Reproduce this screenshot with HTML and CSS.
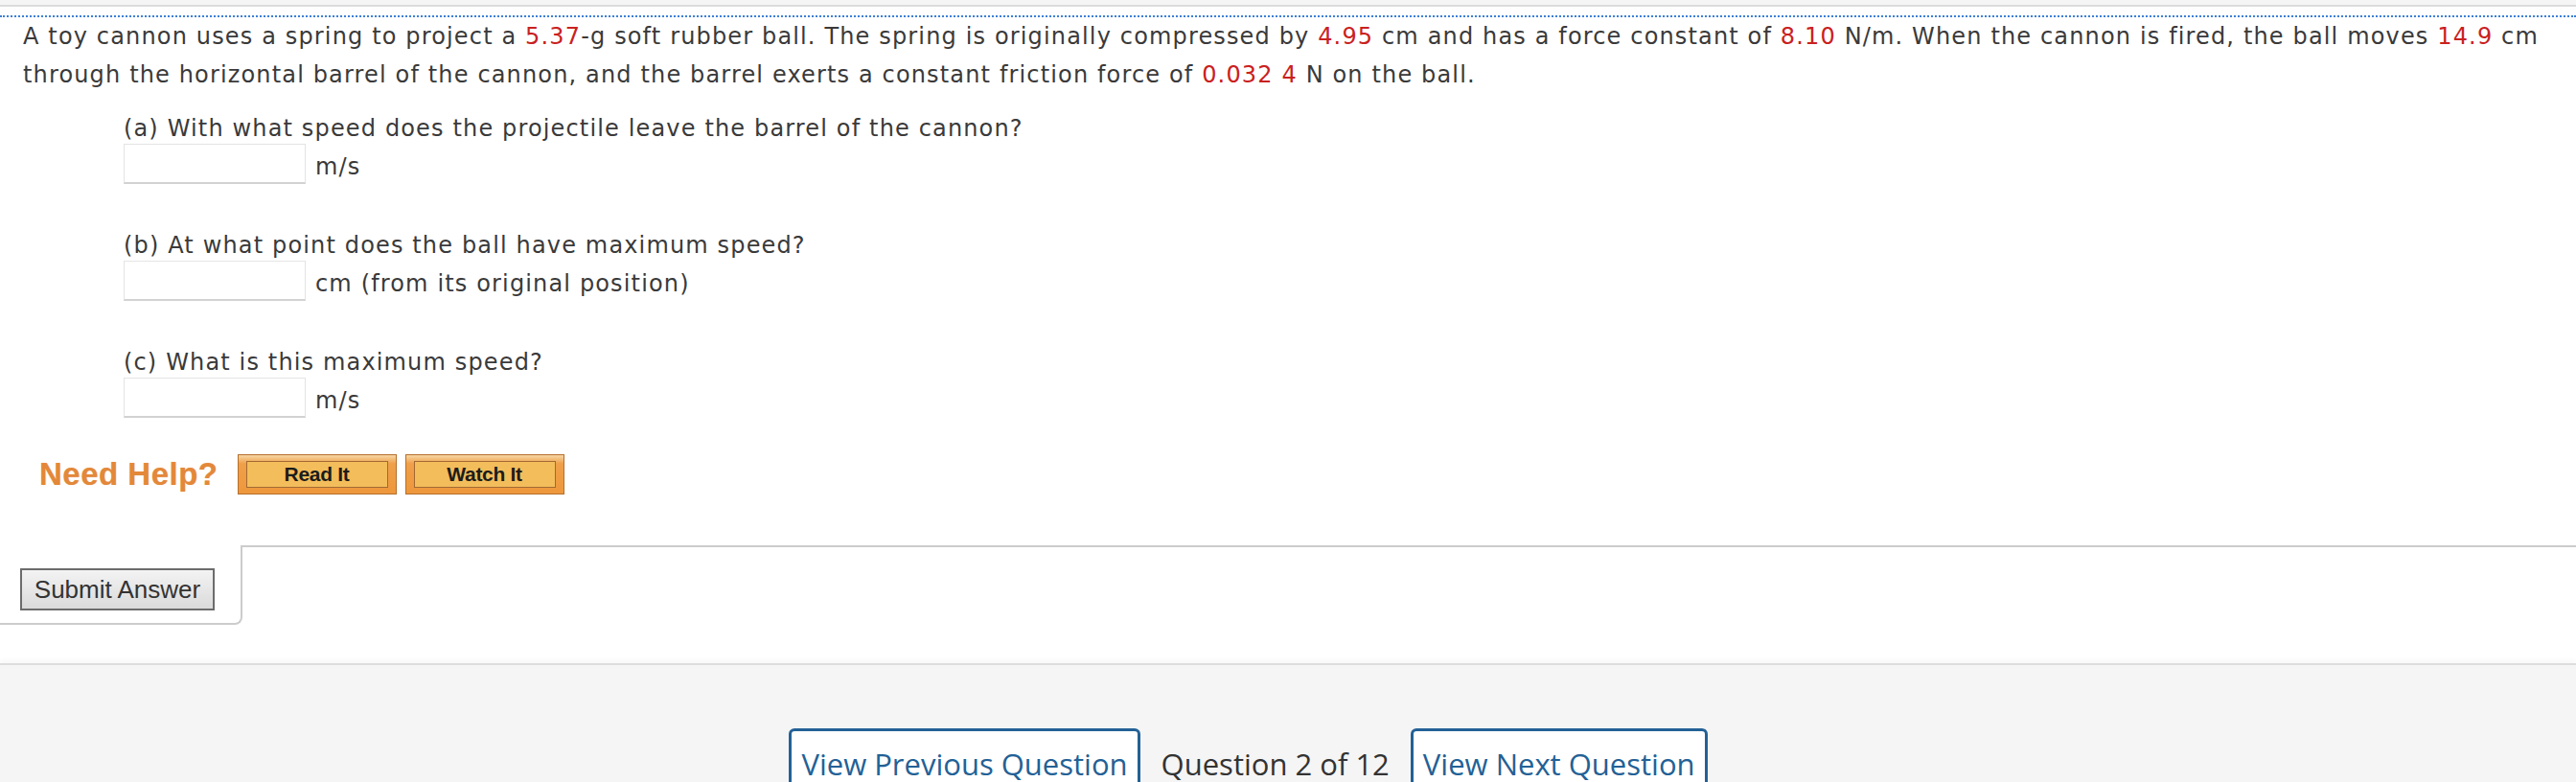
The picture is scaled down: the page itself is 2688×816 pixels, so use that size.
FILE: index.html
```html
<!DOCTYPE html>
<html lang="en">
<head>
<meta charset="utf-8">
<title>Question 2 of 12</title>
<link rel="stylesheet" href="styles.css">
</head>
<body>
<div class="topband"></div>
<div class="question">
  <p class="stem">A toy cannon uses a spring to project a <span class="v">5.37</span>-g soft rubber ball. The spring is originally compressed by <span class="v">4.95</span> cm and has a force constant of <span class="v">8.10</span> N/m. When the cannon is fired, the ball moves <span class="v">14.9</span> cm through the horizontal barrel of the cannon, and the barrel exerts a constant friction force of <span class="v">0.032 4</span> N on the ball.</p>
  <div class="parts">
    <div class="part">
      <div class="label">(a) With what speed does the projectile leave the barrel of the cannon?</div>
      <div class="answer"><input type="text" class="box"><span class="unit">m/s</span></div>
    </div>
    <div class="part">
      <div class="label">(b) At what point does the ball have maximum speed?</div>
      <div class="answer"><input type="text" class="box"><span class="unit">cm (from its original position)</span></div>
    </div>
    <div class="part">
      <div class="label">(c) What is this maximum speed?</div>
      <div class="answer"><input type="text" class="box"><span class="unit">m/s</span></div>
    </div>
  </div>
  <div class="help">
    <span class="need">Need Help?</span>
    <span class="hbtn"><span class="hinner">Read It</span></span>
    <span class="hbtn"><span class="hinner">Watch It</span></span>
  </div>
</div>
<div class="submitrow">
  <div class="submitcell"><button class="submit" type="button">Submit Answer</button></div>
  <div class="submitrest"></div>
</div>
<div class="footer">
  <div class="qnav">
    <a class="navbtn" href="#">View Previous Question</a>
    <span class="qcount">Question 2 of 12</span>
    <a class="navbtn" href="#">View Next Question</a>
  </div>
</div>
</body>
</html>
```

FILE: styles.css
```css
html, body {
  margin: 0;
  padding: 0;
  background: #ffffff;
}
body {
  font-family: "DejaVu Sans", Verdana, sans-serif;
  font-size: 24px;
  letter-spacing: 1.15px;
  color: #3a3a3a;
  overflow: hidden;
}
.topband {
  height: 5px;
  background: #f5f5f5;
  border-bottom: 2px solid #dcdcdc;
}
.question {
  margin-top: 9px;
  border-top: 2px dotted #3b7fd6;
}
.stem {
  margin: 0;
  padding-left: 24px;
  line-height: 40px;
}
.v {
  color: #c9211e;
}
.parts {
  margin-top: 20px;
  padding-left: 129px;
}
.part {
  margin-bottom: 48px;
}
.part:last-child {
  margin-bottom: 0;
}
.label {
  line-height: 32px;
}
.answer {
  display: flex;
  align-items: flex-end;
  gap: 10px;
  height: 42px;
}
.box {
  box-sizing: border-box;
  width: 190px;
  height: 42px;
  margin: 0;
  border: 1px solid #e4e4e4;
  border-bottom: 2px solid #d2d2d2;
  background: #ffffff;
  font: inherit;
}
.unit {
  line-height: 32px;
  margin-bottom: 2px;
}
.help {
  display: flex;
  align-items: center;
  margin-top: 38px;
  padding-left: 41px;
  height: 42px;
  letter-spacing: normal;
}
.need {
  font-family: "Liberation Sans", Arial, sans-serif;
  font-weight: bold;
  font-size: 33px;
  letter-spacing: 0.5px;
  line-height: 42px;
  color: #e3883a;
  margin-right: 20px;
  text-shadow: 0 0 1px rgba(227, 136, 58, 0.5);
}
.hbtn {
  box-sizing: border-box;
  width: 166px;
  height: 42px;
  margin-right: 9px;
  padding: 6px 8px 6px 8px;
  display: flex;
  border: 1px solid #b46f2c;
  background: linear-gradient(#f7d6a4 0%, #efa049 22%, #ee973c 100%);
}
.hinner {
  flex: 1;
  display: flex;
  align-items: center;
  justify-content: center;
  border: 1px solid #a26a33;
  background: #f3bd5b;
  font-family: "Liberation Sans", Arial, sans-serif;
  font-weight: bold;
  font-size: 21px;
  color: #1c1c1c;
  letter-spacing: -0.3px;
}
.submitrow {
  display: flex;
  margin-top: 53px;
}
.submitcell {
  box-sizing: border-box;
  width: 253px;
  height: 83px;
  padding: 24px 0 0 21px;
  border-right: 2px solid #cccccc;
  border-bottom: 2px solid #cccccc;
  border-bottom-right-radius: 8px;
}
.submit {
  box-sizing: border-box;
  width: 203px;
  height: 44px;
  margin: 0;
  padding: 0;
  border: 2px solid #6c6c6c;
  border-radius: 0;
  background: linear-gradient(#f3f3f3, #dadada);
  font-family: "Liberation Sans", Arial, sans-serif;
  font-size: 26px;
  color: #333333;
}
.submitrest {
  flex: 1;
  border-top: 2px solid #cccccc;
}
.footer {
  box-sizing: border-box;
  margin-top: 40px;
  border-top: 2px solid #dddddd;
  background: #f5f5f5;
  height: 124px;
  overflow: hidden;
  padding-top: 66px;
  box-shadow: 0 -3px 5px rgba(0, 0, 0, 0.03);
  letter-spacing: normal;
}
.qnav {
  display: flex;
  align-items: flex-start;
  justify-content: center;
  gap: 22px;
  padding-right: 83px;
  font-family: "Open Sans", sans-serif;
  font-size: 31px;
}
.navbtn {
  display: block;
  border: 3px solid #236196;
  border-radius: 6px 6px 0 0;
  background: #ffffff;
  padding: 13px 10px 20px 10px;
  line-height: 42px;
  color: #236196;
  text-decoration: none;
}
.qcount {
  display: block;
  padding-top: 16px;
  line-height: 42px;
  color: #333333;
}
```
